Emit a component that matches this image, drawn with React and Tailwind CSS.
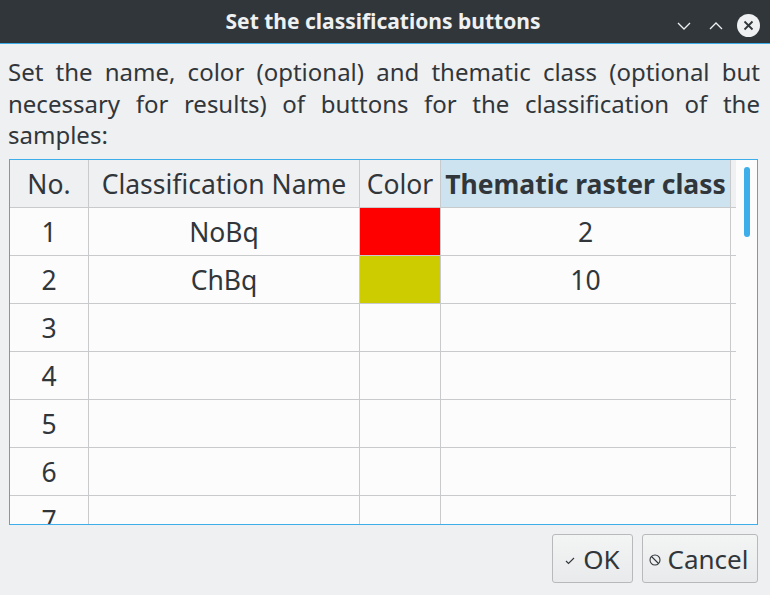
import React from 'react';

const rows = [
    { no: 1, name: 'NoBq', color: '#ff0000', cls: '2' },
    { no: 2, name: 'ChBq', color: '#cccc00', cls: '10' },
    { no: 3 },
    { no: 4 },
    { no: 5 },
    { no: 6 },
    { no: 7 },
];

const ChevronDown = () => (
    <svg width="14" height="8" viewBox="0 0 14 8" fill="none" stroke="#eff0f1" strokeWidth="1.3">
        <path d="M1 1 L7 7 L13 1" />
    </svg>
);

const ChevronUp = () => (
    <svg width="14" height="8" viewBox="0 0 14 8" fill="none" stroke="#eff0f1" strokeWidth="1.3">
        <path d="M1 7 L7 1 L13 7" />
    </svg>
);

const CloseIcon = () => (
    <svg width="23" height="23" viewBox="0 0 23 23">
        <circle cx="11.5" cy="11.5" r="11.5" fill="#eff0f1" />
        <path d="M7.5 7.5 L15.5 15.5 M15.5 7.5 L7.5 15.5" stroke="#31363b" strokeWidth="1.8" />
    </svg>
);

const App = () => {
    return (
        <div className="w-[770px] h-[595px] flex flex-col bg-[#eff0f1] overflow-hidden text-[#31363b]" style={{ fontFamily: '"Noto Sans", "Open Sans", sans-serif' }}>
            {/* title bar */}
            <div className="h-[44px] shrink-0 bg-[#31363b] border-b border-[#3daee9] relative flex items-center justify-center">
                <span className="text-[21px] font-bold text-[#eff0f1] leading-none pr-[4px]">Set the classifications buttons</span>
                <div className="absolute right-[10px] top-[14px] flex items-center">
                    <span className="mr-[18px] mt-[1px]"><ChevronDown /></span>
                    <span className="mr-[14px] mt-[1px]"><ChevronUp /></span>
                    <CloseIcon />
                </div>
            </div>

            <p className="pt-[12px] pl-[8px] pr-[10px] text-[24px] leading-[31.5px] text-justify">
                Set the name, color (optional) and thematic class (optional but necessary for results) of buttons for the classification of the samples:
            </p>

            {/* table */}
            <div className="mt-[8px] ml-[9px] w-[749px] h-[366px] border border-[#3daee9] flex overflow-hidden bg-[#fcfcfc] shrink-0">
                <div className="w-[726px] flex flex-col text-[26.5px]">
                    <div className="flex h-[48px] shrink-0 pt-[3px] bg-[#eff0f1] border-b border-[#c9cacb]">
                        <div className="w-[79px] -mt-[3px] pt-[3px] border-r border-[#c9cacb] flex items-center justify-center">No.</div>
                        <div className="w-[271px] -mt-[3px] pt-[3px] border-r border-[#c9cacb] flex items-center justify-center">Classification Name</div>
                        <div className="w-[81px] -mt-[3px] pt-[3px] border-r border-[#c9cacb] flex items-center justify-center">Color</div>
                        <div className="w-[290px] -mt-[3px] pt-[3px] border-r border-[#c9cacb] bg-[#cde4f0] font-bold flex items-center justify-center">Thematic raster class</div>
                        <div className="flex-1" />
                    </div>
                    {rows.map((row) => (
                        <div key={row.no} className="flex h-[48px] shrink-0 border-b border-[#c9cacb]">
                            <div className="w-[79px] pt-[3px] border-r border-[#c9cacb] flex items-center justify-center">{row.no}</div>
                            <div className="w-[271px] pt-[3px] border-r border-[#c9cacb] flex items-center justify-center">{row.name}</div>
                            <div className="w-[81px] border-r border-[#c9cacb]" style={row.color ? { backgroundColor: row.color } : undefined} />
                            <div className="w-[290px] pt-[3px] border-r border-[#c9cacb] flex items-center justify-center">{row.cls}</div>
                        </div>
                    ))}
                </div>
                <div className="flex-1 relative">
                    <div className="absolute left-[8px] top-[7px] w-[6px] h-[70px] rounded-full bg-[#3daee9]" />
                </div>
            </div>

            {/* buttons */}
            <div className="mt-[9px] flex justify-end gap-[9px] pr-[12px]">
                <button className="w-[81px] h-[49px] pt-[3px] rounded-[3px] border border-[#b7b9ba] bg-gradient-to-b from-[#f3f4f4] to-[#e9eaeb] flex items-center justify-center text-[26px]">
                    <svg width="10" height="8" viewBox="0 0 10 8" fill="none" stroke="#31363b" strokeWidth="1.1" className="mr-[8px] mt-[2px]">
                        <path d="M1 4 L3.5 6.5 L9 1" />
                    </svg>
                    OK
                </button>
                <button className="w-[116px] h-[49px] pt-[3px] rounded-[3px] border border-[#b7b9ba] bg-gradient-to-b from-[#f3f4f4] to-[#e9eaeb] flex items-center justify-center text-[26px]">
                    <svg width="12" height="12" viewBox="0 0 12 12" fill="none" stroke="#31363b" strokeWidth="1.1" className="mr-[7px] -ml-[3px]">
                        <circle cx="6" cy="6" r="5" />
                        <path d="M2.5 2.5 L9.5 9.5" />
                    </svg>
                    Cancel
                </button>
            </div>
        </div>
    );
};

export default App;
